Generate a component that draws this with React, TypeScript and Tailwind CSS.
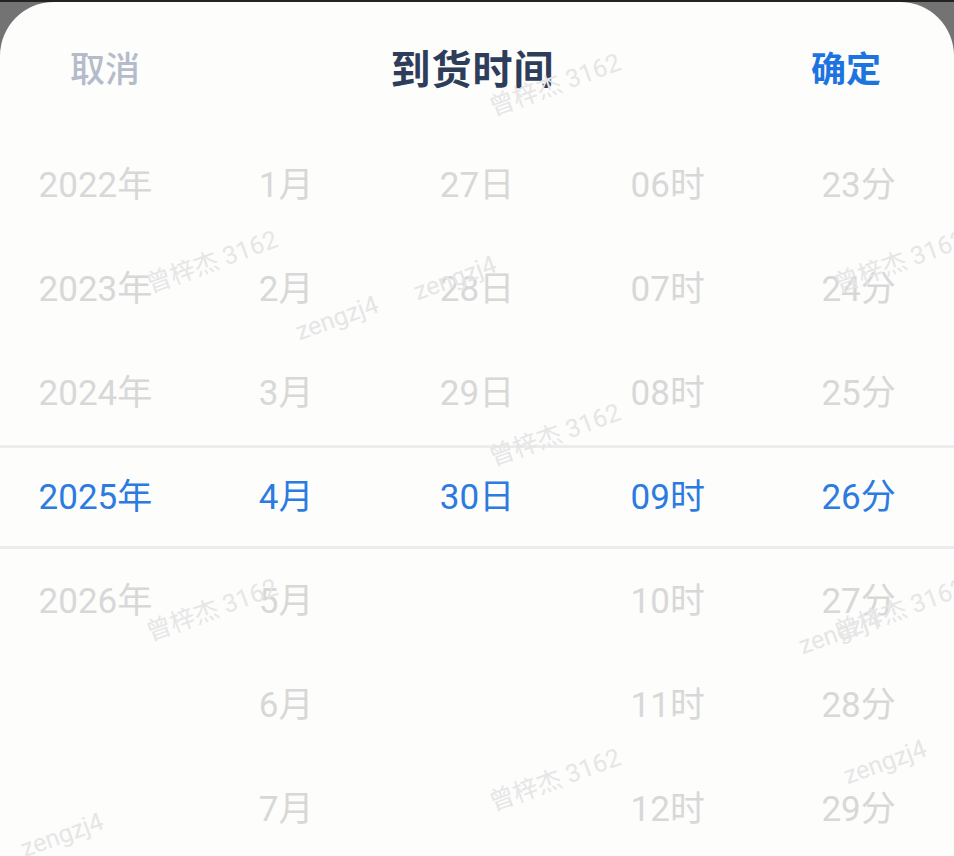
import React from "react";

const years = ["2022年", "2023年", "2024年", "2025年", "2026年", "", ""];
const months = ["1月", "2月", "3月", "4月", "5月", "6月", "7月"];
const days = ["27日", "28日", "29日", "30日", "", "", ""];
const hours = ["06时", "07时", "08时", "09时", "10时", "11时", "12时"];
const minutes = ["23分", "24分", "25分", "26分", "27分", "28分", "29分"];

const columns = [years, months, days, hours, minutes];
const SELECTED = 3;

// faint watermark text laid over the sheet
const marks = [
  { text: "曾梓杰 3162", x: 555, y: 85 },
  { text: "曾梓杰 3162", x: 212, y: 262 },
  { text: "zengzj4", x: 337, y: 318 },
  { text: "zengzj4", x: 455, y: 278 },
  { text: "曾梓杰 3162", x: 555, y: 435 },
  { text: "曾梓杰 3162", x: 900, y: 262 },
  { text: "曾梓杰 3162", x: 212, y: 610 },
  { text: "zengzj4", x: 840, y: 632 },
  { text: "曾梓杰 3162", x: 900, y: 610 },
  { text: "曾梓杰 3162", x: 555, y: 780 },
  { text: "zengzj4", x: 885, y: 762 },
  { text: "zengzj4", x: 62, y: 835 },
];

function Column({ items }: { items: string[] }) {
  return (
    <div className="flex flex-col">
      {items.map((item, i) => (
        <div
          key={i}
          className={
            "h-[104px] flex items-center justify-center text-[35px] " +
            (i === SELECTED ? "text-[#2b7be0]" : "text-[#d8d8d8]")
          }
        >
          {item}
        </div>
      ))}
    </div>
  );
}

export default function App() {
  return (
    <div
      className="w-[954px] h-[856px] bg-[#737373] border-t-2 border-[#262222] overflow-hidden"
      style={{ fontFamily: "Roboto, 'Noto Sans CJK SC', sans-serif" }}
    >
      <div className="relative h-full bg-[#fdfdfc] rounded-t-[54px] overflow-hidden">
        <div className="h-[132px] flex items-center justify-between pl-[70px] pr-[73px] pt-[6px]">
          <span className="text-[35px] font-medium text-[#b4bccb]">取消</span>
          <span className="text-[40px] font-semibold text-[#2d3d5a] tracking-[1px] ml-[-6px]">到货时间</span>
          <span className="text-[35px] font-semibold text-[#1d74e0]">确定</span>
        </div>

        <div className="relative">
          <div className="absolute left-0 right-0 top-[311px] h-[104px] border-y-[3px] border-[#ececec]" />
          <div className="grid grid-cols-5">
            {columns.map((col, i) => (
              <Column key={i} items={col} />
            ))}
          </div>
        </div>

        {marks.map((m, i) => (
          <span
            key={i}
            className="absolute whitespace-nowrap text-[25px] text-[#e6e6e6] pointer-events-none -rotate-[20deg] -translate-x-1/2 -translate-y-1/2"
            style={{ left: m.x, top: m.y - 2 }}
          >
            {m.text}
          </span>
        ))}
      </div>
    </div>
  );
}
